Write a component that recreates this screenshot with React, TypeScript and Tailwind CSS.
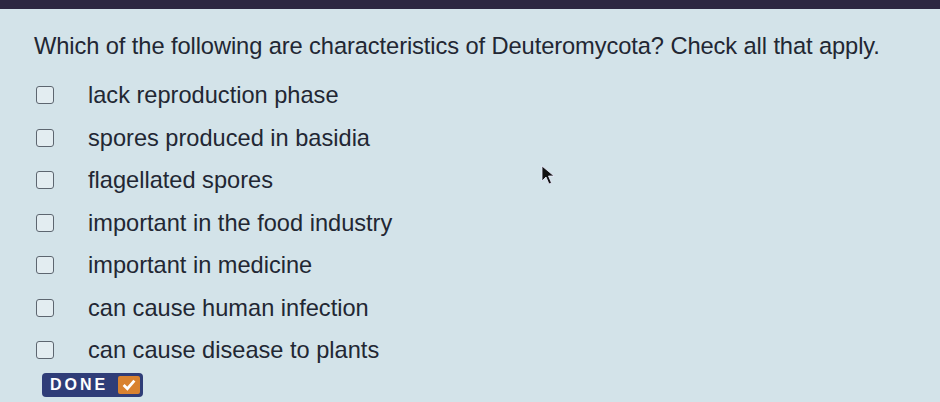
import React from 'react';

const options = [
  'lack reproduction phase',
  'spores produced in basidia',
  'flagellated spores',
  'important in the food industry',
  'important in medicine',
  'can cause human infection',
  'can cause disease to plants',
];

export default function App() {
  return (
    <div
      className="relative w-[940px] h-[402px] overflow-hidden bg-[#d3e3e9] text-[#222733]"
      style={{ fontFamily: '"Liberation Sans", Arial, sans-serif' }}
    >
      {/* top dark strip */}
      <div className="h-[9px] bg-[#2c2741]" />

      <div className="pl-[34px] pt-[24px]">
        <h1 className="text-[23.7px] leading-[26px] tracking-[-0.1px]">
          Which of the following are characteristics of Deuteromycota? Check all that apply.
        </h1>

        <ul className="mt-[15px] flex flex-col">
          {options.map((opt) => (
            <li key={opt} className="flex items-center h-[42.5px]">
              <span className="ml-[2px] w-[18px] h-[18px] rounded-[3px] border-[1.5px] border-[#5d6670] bg-[#e3edf1]" />
              <span className="ml-[34px] text-[23.6px] leading-[26px]">{opt}</span>
            </li>
          ))}
        </ul>

        <button className="mt-[1px] ml-[8px] flex items-center h-[24px] rounded-[4px] bg-[#2f3d78] pl-[8px] pr-[3px]">
          <span className="text-white font-bold text-[16px] tracking-[3px]">DONE</span>
          <span className="ml-[10px] w-[22px] h-[18px] rounded-[2px] bg-[#d9822f] flex items-center justify-center">
            <svg width="14" height="12" viewBox="0 0 13 11">
              <path d="M1.5 5.5 L5 9 L11.5 1.5" fill="none" stroke="white" strokeWidth="2.6" />
            </svg>
          </span>
        </button>
      </div>

      {/* mouse cursor */}
      <svg className="absolute left-[541px] top-[165px]" width="16" height="22" viewBox="0 0 16 22">
        <path d="M1 1 L1 16 L5 12 L8 19 L10.5 18 L7.5 11 L13 11 Z" fill="#111" stroke="#eef" strokeWidth="0.8" />
      </svg>
    </div>
  );
}
